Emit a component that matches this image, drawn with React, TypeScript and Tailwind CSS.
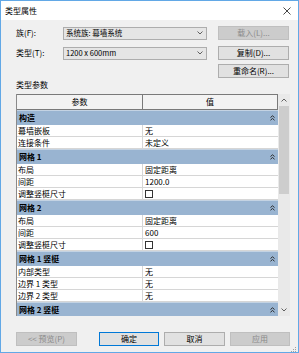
import React from "react";

type Row =
  | { kind: "cat"; label: string }
  | { kind: "data"; label: string; value?: string; check?: boolean };

const rows: Row[] = [
  { kind: "cat", label: "构造" },
  { kind: "data", label: "幕墙嵌板", value: "无" },
  { kind: "data", label: "连接条件", value: "未定义" },
  { kind: "cat", label: "网格 1" },
  { kind: "data", label: "布局", value: "固定距离" },
  { kind: "data", label: "间距", value: "1200.0" },
  { kind: "data", label: "调整竖梃尺寸", check: true },
  { kind: "cat", label: "网格 2" },
  { kind: "data", label: "布局", value: "固定距离" },
  { kind: "data", label: "间距", value: "600" },
  { kind: "data", label: "调整竖梃尺寸", check: true },
  { kind: "cat", label: "网格 1 竖梃" },
  { kind: "data", label: "内部类型", value: "无" },
  { kind: "data", label: "边界 1 类型", value: "无" },
  { kind: "data", label: "边界 2 类型", value: "无" },
  { kind: "cat", label: "网格 2 竖梃" },
];

const Collapse = () => (
  <svg width="5" height="6" viewBox="0 0 5 6" fill="none" stroke="#2b2b2b" strokeWidth="1">
    <path d="M0.5 2.5 L2.5 0.8 L4.5 2.5 M0.5 5.2 L2.5 3.5 L4.5 5.2" />
  </svg>
);

const Chevron = ({ up = false }: { up?: boolean }) => (
  <svg width="6" height="4" viewBox="0 0 6 4" fill="none" stroke="#606060" strokeWidth="1">
    <path d={up ? "M0.5 3.5 L3 1 L5.5 3.5" : "M0.5 0.5 L3 3 L5.5 0.5"} />
  </svg>
);

const Select = ({ value }: { value: string }) => (
  <div className="w-[144px] h-[13px] border border-[#adadad] bg-[#e5e5e5] flex items-center justify-between pl-[2px] pr-[3px]">
    <span className="text-[7.5px]">{value}</span>
    <Chevron />
  </div>
);

const Btn = ({ label, w, disabled, primary }: { label: string; w: string; disabled?: boolean; primary?: boolean }) => (
  <div
    className={
      w +
      " h-[14px] flex items-center justify-center border " +
      (disabled
        ? "bg-[#cccccc] border-[#bfbfbf] text-[#8a8a8a]"
        : primary
        ? "bg-[#e1e1e1] border-[#0078d7] text-black"
        : "bg-[#e1e1e1] border-[#adadad] text-black")
    }
  >
    {label}
  </div>
);

export default function App() {
  return (
    <div className="w-[299px] h-[353px] border border-[#62a8e6] bg-[#f0f0f0] flex flex-col font-['Noto_Sans_CJK_SC',sans-serif] text-[8px] leading-none text-black">
      <div className="h-[19px] bg-white flex items-center justify-between pl-[4px] pr-[7px] shrink-0">
        <span>类型属性</span>
        <svg width="8" height="8" viewBox="0 0 8 8" stroke="#333" strokeWidth="0.9">
          <path d="M0.5 0.5 L7.5 7.5 M7.5 0.5 L0.5 7.5" />
        </svg>
      </div>

      <div className="flex-1 flex flex-col pl-[15px] pr-[8px]">
        <div className="mt-[6px] flex items-center h-[14px]">
          <span className="w-[47px]">族(F):</span>
          <Select value="系统族: 幕墙系统" />
          <div className="ml-[11px]">
            <Btn label="载入(L)..." w="w-[71px]" disabled />
          </div>
        </div>
        <div className="mt-[6px] flex items-center h-[14px]">
          <span className="w-[47px]">类型(T):</span>
          <Select value="1200 x 600mm" />
          <div className="ml-[11px]">
            <Btn label="复制(D)..." w="w-[71px]" />
          </div>
        </div>
        <div className="mt-[4px] flex items-center h-[14px]">
          <div className="w-[202px]" />
          <Btn label="重命名(R)..." w="w-[71px]" />
        </div>

        <div className="mt-[1px] h-[12px] flex items-center">类型参数</div>

        <div className="mt-[3px] h-[222px] flex">
          <div className="w-[262px] flex flex-col overflow-hidden border-l border-[#8a8a8a]">
            <div className="h-[16px] shrink-0 flex border-t border-b border-r border-[#7a7a7a] bg-[#f3f3f3]">
              <div className="w-[126px] border-r border-[#7a7a7a] flex items-center justify-center">参数</div>
              <div className="flex-1 flex items-center justify-center">值</div>
            </div>
            {rows.map((r, i) =>
              r.kind === "cat" ? (
                <div
                  key={i}
                  className="h-[15px] shrink-0 bg-[#99b4d1] border-t border-[#c4d3e3] flex items-center justify-between pl-[2px] pr-[3px] font-bold"
                >
                  <span>{r.label}</span>
                  <Collapse />
                </div>
              ) : (
                <div key={i} className="h-[12px] shrink-0 flex bg-white border-b border-[#d6d6d6]">
                  <div className="w-[126px] border-r border-[#d6d6d6] flex items-center pl-[1px]">{r.label}</div>
                  <div className="flex-1 flex items-center pl-[2px]">
                    {r.check ? (
                      <div className="w-[8px] h-[8px] border border-[#333] bg-white" />
                    ) : (
                      r.value
                    )}
                  </div>
                </div>
              )
            )}
          </div>
          <div className="w-[12px] bg-[#e9e9e9] flex flex-col">
            <div className="h-[12px] flex items-center justify-center">
              <Chevron up />
            </div>
            <div className="w-[10px] h-[88px] mx-auto bg-[#cdcdcd]" />
            <div className="flex-1" />
            <div className="h-[12px] flex items-center justify-center">
              <Chevron />
            </div>
          </div>
        </div>

        <div className="mt-[16px] flex items-center">
          <Btn label="<< 预览(P)" w="w-[61px]" disabled />
          <div className="ml-[22px]">
            <Btn label="确定" w="w-[60px]" primary />
          </div>
          <div className="ml-[5px]">
            <Btn label="取消" w="w-[61px]" />
          </div>
          <div className="ml-[5px]">
            <Btn label="应用" w="w-[60px]" disabled />
          </div>
        </div>
        <div className="flex justify-end -mr-[7px] mt-[1px]">
          <svg width="6" height="6" viewBox="0 0 6 6" fill="#a0a0a0">
            <rect x="4" y="0" width="1" height="1" />
            <rect x="2" y="2" width="1" height="1" />
            <rect x="4" y="2" width="1" height="1" />
            <rect x="0" y="4" width="1" height="1" />
            <rect x="2" y="4" width="1" height="1" />
            <rect x="4" y="4" width="1" height="1" />
          </svg>
        </div>
      </div>
    </div>
  );
}
